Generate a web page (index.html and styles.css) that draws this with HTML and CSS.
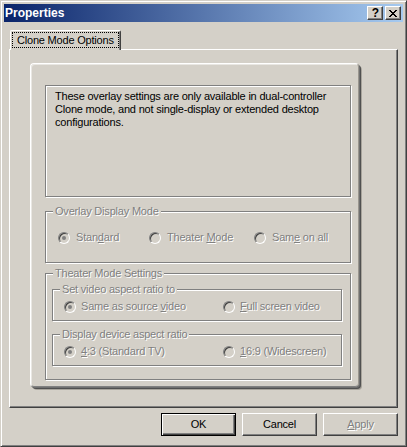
FILE: index.html
```html
<!DOCTYPE html>
<html>
<head>
    <title>Properties</title>
    <link rel="stylesheet" href="styles.css">
</head>
<body>
    <div class="window">
        <div class="titlebar">
            <span class="title">Properties</span>
            <span class="tb-btn help">?</span>
            <span class="tb-btn">
                <svg width="8" height="7" viewBox="0 0 8 7" shape-rendering="crispEdges"><path d="M0 0h2v1H0z M6 0h2v1H6z M1 1h2v1H1z M5 1h2v1H5z M2 2h4v1H2z M3 3h2v1H3z M2 4h4v1H2z M1 5h2v1H1z M5 5h2v1H5z M0 6h2v1H0z M6 6h2v1H6z" fill="#000"/></svg>
            </span>
        </div>

        <div class="client">
            <div class="tabs">
                <div class="tab"><span class="focus">Clone Mode Options</span></div>
            </div>

            <div class="panel">
                <div class="raised">
                    <div class="note etched">
                        These overlay settings are only available in dual-controller<br>
                        Clone mode, and not single-display or extended desktop<br>
                        configurations.
                    </div>

                    <fieldset class="group etched overlay">
                        <legend>Overlay Display Mode</legend>
                        <div class="row three">
                            <label class="opt"><span class="radio on"></span><span>Stan<u>d</u>ard</span></label>
                            <label class="opt"><span class="radio"></span><span>Theater <u>M</u>ode</span></label>
                            <label class="opt"><span class="radio"></span><span>Sam<u>e</u> on all</span></label>
                        </div>
                    </fieldset>

                    <fieldset class="group etched theater">
                        <legend>Theater Mode Settings</legend>

                        <fieldset class="sub etched first">
                            <legend>Set video aspect ratio to</legend>
                            <div class="row two">
                                <label class="opt"><span class="radio on"></span><span>Same as source <u>v</u>ideo</span></label>
                                <label class="opt"><span class="radio"></span><span><u>F</u>ull screen video</span></label>
                            </div>
                        </fieldset>

                        <fieldset class="sub etched second">
                            <legend>Display device aspect ratio</legend>
                            <div class="row two">
                                <label class="opt"><span class="radio on"></span><span><u>4</u>:3 (Standard TV)</span></label>
                                <label class="opt"><span class="radio"></span><span><u>1</u>6:9 (Widescreen)</span></label>
                            </div>
                        </fieldset>
                    </fieldset>
                </div>
            </div>

            <div class="buttons">
                <span class="btn default">OK</span>
                <span class="btn">Cancel</span>
                <span class="btn disabled"><u>A</u>pply</span>
            </div>
        </div>
    </div>
</body>
</html>
```

FILE: styles.css
```css
* { box-sizing: border-box; }
body { margin: 0; background: #d4d0c8; font: 11px/13px "Liberation Sans", Arial, sans-serif; letter-spacing: -0.2px; color: #000; }

.window { width: 407px; height: 447px; border: 1px solid; border-color: #d4d0c8 #404040 #404040 #d4d0c8; box-shadow: inset 1px 1px 0 #fff, inset -1px -1px 0 #808080; padding: 3px; display: flex; flex-direction: column; }

.titlebar { height: 18px; flex: none; display: flex; align-items: center; padding: 0 2px 0 1px; background: linear-gradient(to right, #0a246a, #a6caf0); color: #fff; font-weight: bold; font-size: 12px; letter-spacing: 0; }
.title { flex: 1; }
.tb-btn { width: 16px; height: 14px; border: 1px solid; border-color: #fff #404040 #404040 #fff; box-shadow: inset -1px -1px 0 #808080; background: #d4d0c8; color: #000; display: flex; align-items: center; justify-content: center; }
.tb-btn + .tb-btn { margin-left: 2px; }
.help { font-size: 12px; line-height: 12px; padding-left: 1px; }

.client { flex: 1; display: flex; flex-direction: column; padding: 8px 5px 7px; }
.tabs { display: flex; padding-left: 1px; position: relative; z-index: 1; margin-bottom: -1px; }
.tab { height: 20px; padding: 1px; border: 1px solid; border-bottom: none; border-color: #fff #404040 #404040 #fff; border-radius: 2px 2px 0 0; box-shadow: inset -1px 0 0 #808080; background: #d4d0c8; }
.focus { display: block; height: 16px; padding: 0 4px; border: 1px dotted #000; line-height: 14px; }

.panel { flex: 1; border: 1px solid; border-color: #fff #404040 #404040 #fff; box-shadow: inset -1px -1px 0 #808080; padding: 13px 0 0 20px; }

.raised { width: 329px; padding: 21px 0 6px 14px; border: 1px solid; border-color: #fff #9a968f #808080 #fff; border-radius: 4px; box-shadow: inset 1px 1px 0 #e9e7e3, 1px 1px 0 #707070, 2px 2px 0 #505050, 3px 3px 0 #a8a49c; }

.etched { border: 1px solid #808080; box-shadow: 1px 1px 0 #fff, inset 1px 1px 0 #fff; }
.note { width: 306px; height: 112px; padding: 4px 9px; }

fieldset { margin: 0; padding: 0; min-width: 0; }
legend { margin-left: 7px; padding: 0 2px; background: #d4d0c8; color: #808080; text-shadow: 1px 1px 0 #fff; }
.group { width: 306px; }
.overlay { margin-top: 8px; padding: 13px 0 18px; }
.overlay .row { margin-left: 12px; }
.theater { margin-top: 4px; padding: 0 0 13px; }
.sub { width: 290px; margin-left: 6px; padding: 4px 0 7px; }
.sub .row { margin-left: 11px; }
.sub.first { margin-top: 3px; }
.sub.second { margin-top: 7px; }

.row { display: grid; height: 13px; align-items: center; }
.row.three { grid-template-columns: 91px 105px auto; }
.row.two { grid-template-columns: 159px auto; }
.opt { display: flex; align-items: center; gap: 6px; color: #808080; text-shadow: 1px 1px 0 #fff; white-space: nowrap; }
.row.two .opt { gap: 5px; }

.radio { position: relative; flex: none; width: 12px; height: 12px; border-radius: 50%; border: 1px solid; border-color: #808080 #fff #fff #808080; box-shadow: inset 1px 1px 0 #404040, inset -1px -1px 0 #d4d0c8; background: #d4d0c8; }
.radio.on::after { content: ""; position: absolute; left: 3px; top: 3px; width: 4px; height: 4px; border-radius: 50%; background: #808080; }

.buttons { display: flex; justify-content: flex-end; gap: 6px; margin-top: 5px; }
.btn { width: 75px; height: 23px; display: flex; align-items: center; justify-content: center; border: 1px solid; border-color: #fff #404040 #404040 #fff; box-shadow: inset -1px -1px 0 #808080; background: #d4d0c8; }
.btn.default { border-color: #000; box-shadow: inset 1px 1px 0 #fff, inset -1px -1px 0 #404040, inset -2px -2px 0 #808080; }
.btn.disabled { color: #808080; text-shadow: 1px 1px 0 #fff; }
```
